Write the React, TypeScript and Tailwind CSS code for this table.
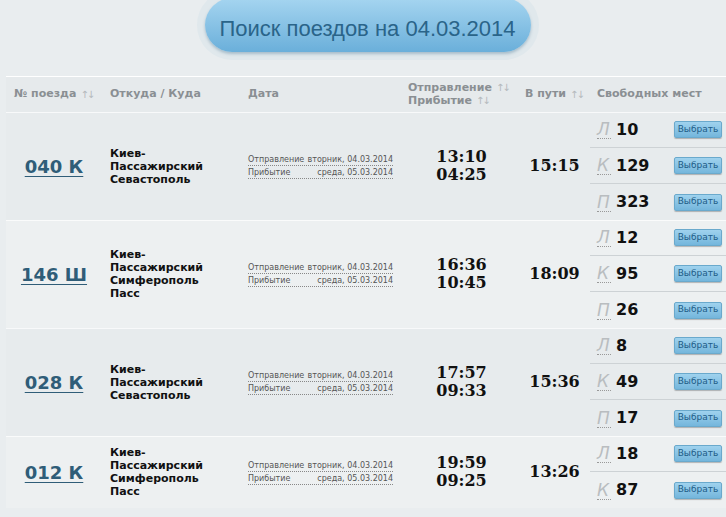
import React from "react";

type Seat = { type: string; count: number };
type Train = {
  num: string;
  route: string[];
  dep: string;
  arr: string;
  travel: string;
  seats: Seat[];
  bg: string;
};

const TRAINS: Train[] = [
  {
    num: "040 К",
    route: ["Киев-", "Пассажирский", "Севастополь"],
    dep: "13:10",
    arr: "04:25",
    travel: "15:15",
    seats: [
      { type: "Л", count: 10 },
      { type: "К", count: 129 },
      { type: "П", count: 323 },
    ],
    bg: "bg-[#e7ebed]",
  },
  {
    num: "146 Ш",
    route: ["Киев-", "Пассажирский", "Симферополь", "Пасс"],
    dep: "16:36",
    arr: "10:45",
    travel: "18:09",
    seats: [
      { type: "Л", count: 12 },
      { type: "К", count: 95 },
      { type: "П", count: 26 },
    ],
    bg: "bg-[#edf0f1]",
  },
  {
    num: "028 К",
    route: ["Киев-", "Пассажирский", "Севастополь"],
    dep: "17:57",
    arr: "09:33",
    travel: "15:36",
    seats: [
      { type: "Л", count: 8 },
      { type: "К", count: 49 },
      { type: "П", count: 17 },
    ],
    bg: "bg-[#e7ebed]",
  },
  {
    num: "012 К",
    route: ["Киев-", "Пассажирский", "Симферополь", "Пасс"],
    dep: "19:59",
    arr: "09:25",
    travel: "13:26",
    seats: [
      { type: "Л", count: 18 },
      { type: "К", count: 87 },
    ],
    bg: "bg-[#edf0f1]",
  },
];

const sans = "font-['DejaVu_Sans',Verdana,sans-serif]";
const serif = "font-['DejaVu_Serif',Georgia,serif]";
const grid = "grid grid-cols-[96px_146px_152px_117px_73px_136px]";

function Arrows() {
  return <span className="font-normal text-[#b4b9bc] text-[10px] ml-1 tracking-[-2px]">↑↓</span>;
}

function TrainRow({ t }: { t: Train }) {
  return (
    <div className={`${grid} ${t.bg} shadow-[inset_0_1px_0_rgba(255,255,255,0.7)]`}>
      <div className="flex items-center justify-center">
        <a className={`${sans} font-bold text-[18px] text-[#2f5d78] underline underline-offset-[3px] decoration-1`}>
          {t.num}
        </a>
      </div>
      <div className={`${sans} flex flex-col justify-center pl-2 font-bold text-[11px] leading-[13px] text-[#111]`}>
        {t.route.map((r) => (
          <span key={r}>{r}</span>
        ))}
      </div>
      <div className={`${sans} flex flex-col justify-center text-[8px] text-[#555] pr-[7px]`}>
        <div className="flex justify-between border-b border-dotted border-[#888] leading-[11px]">
          <span>Отправление</span>
          <span>вторник, 04.03.2014</span>
        </div>
        <div className="flex justify-between border-b border-dotted border-[#888] leading-[11px] mt-[1px]">
          <span>Прибытие</span>
          <span>среда, 05.03.2014</span>
        </div>
      </div>
      <div className={`${serif} flex flex-col items-center justify-center font-bold text-[16px] leading-[18px] text-[#111] pl-[6px]`}>
        <span>{t.dep}</span>
        <span>{t.arr}</span>
      </div>
      <div className={`${serif} flex items-center justify-center font-bold text-[16px] text-[#111] pl-[2px]`}>
        {t.travel}
      </div>
      <div className="flex flex-col">
        {t.seats.map((s, i) => (
          <div
            key={s.type + i}
            className={`h-9 flex items-center pl-[7px] pr-1 ${i < t.seats.length - 1 ? "border-b border-[#cdd2d5]" : ""}`}
          >
            <span className="font-['DejaVu_Sans',sans-serif] italic text-[17px] leading-[18px] text-[#b9bdc0] border-b border-dotted border-[#999] w-[14px]">
              {s.type}
            </span>
            <span className={`${sans} font-bold text-[16px] text-[#111] ml-[5px]`}>{s.count}</span>
            <button
              className={`${sans} ml-auto h-[17px] w-[48px] rounded-[2px] border border-[#6aa9cc] bg-gradient-to-b from-[#9fd2ee] to-[#74b6dc] text-[9px] text-[#1d5c87] shadow-[0_1px_1px_rgba(0,0,0,0.25)]`}
            >
              Выбрать
            </button>
          </div>
        ))}
      </div>
    </div>
  );
}

export default function App() {
  return (
    <div className="w-[726px] h-[517px] overflow-hidden bg-[#e9edef]">
      <div className="h-[76px] flex justify-center">
        <div className="mt-[-10px] h-[70px] rounded-full bg-[#e0e8ec] p-[8px] ml-[9px]">
          <div className="h-[54px] w-[326px] rounded-full bg-gradient-to-b from-[#a5d5f0] to-[#6aafda] shadow-[0_2px_3px_rgba(60,110,140,0.35)] flex items-center justify-center pt-[6px]">
            <span className="font-['Liberation_Sans',Arial,sans-serif] text-[22px] text-[#2a6489]">
              Поиск поездов на 04.03.2014
            </span>
          </div>
        </div>
      </div>
      <div className="pl-[6px]">
        <div className={`${grid} ${sans} h-9 shadow-[inset_0_1px_0_#fff] font-bold text-[11px] text-[#8a8f93] bg-[#e6eaec]`}>
          <div className="flex items-center pl-2">
            № поезда
            <Arrows />
          </div>
          <div className="flex items-center pl-2">Откуда / Куда</div>
          <div className="flex items-center">Дата</div>
          <div className="flex flex-col justify-center pl-2 leading-[13px]">
            <span>
              Отправление
              <Arrows />
            </span>
            <span>
              Прибытие
              <Arrows />
            </span>
          </div>
          <div className="flex items-center pl-2">
            В пути
            <Arrows />
          </div>
          <div className="flex items-center pl-[7px]">Свободных мест</div>
        </div>
        {TRAINS.map((t) => (
          <TrainRow key={t.num} t={t} />
        ))}
      </div>
    </div>
  );
}
